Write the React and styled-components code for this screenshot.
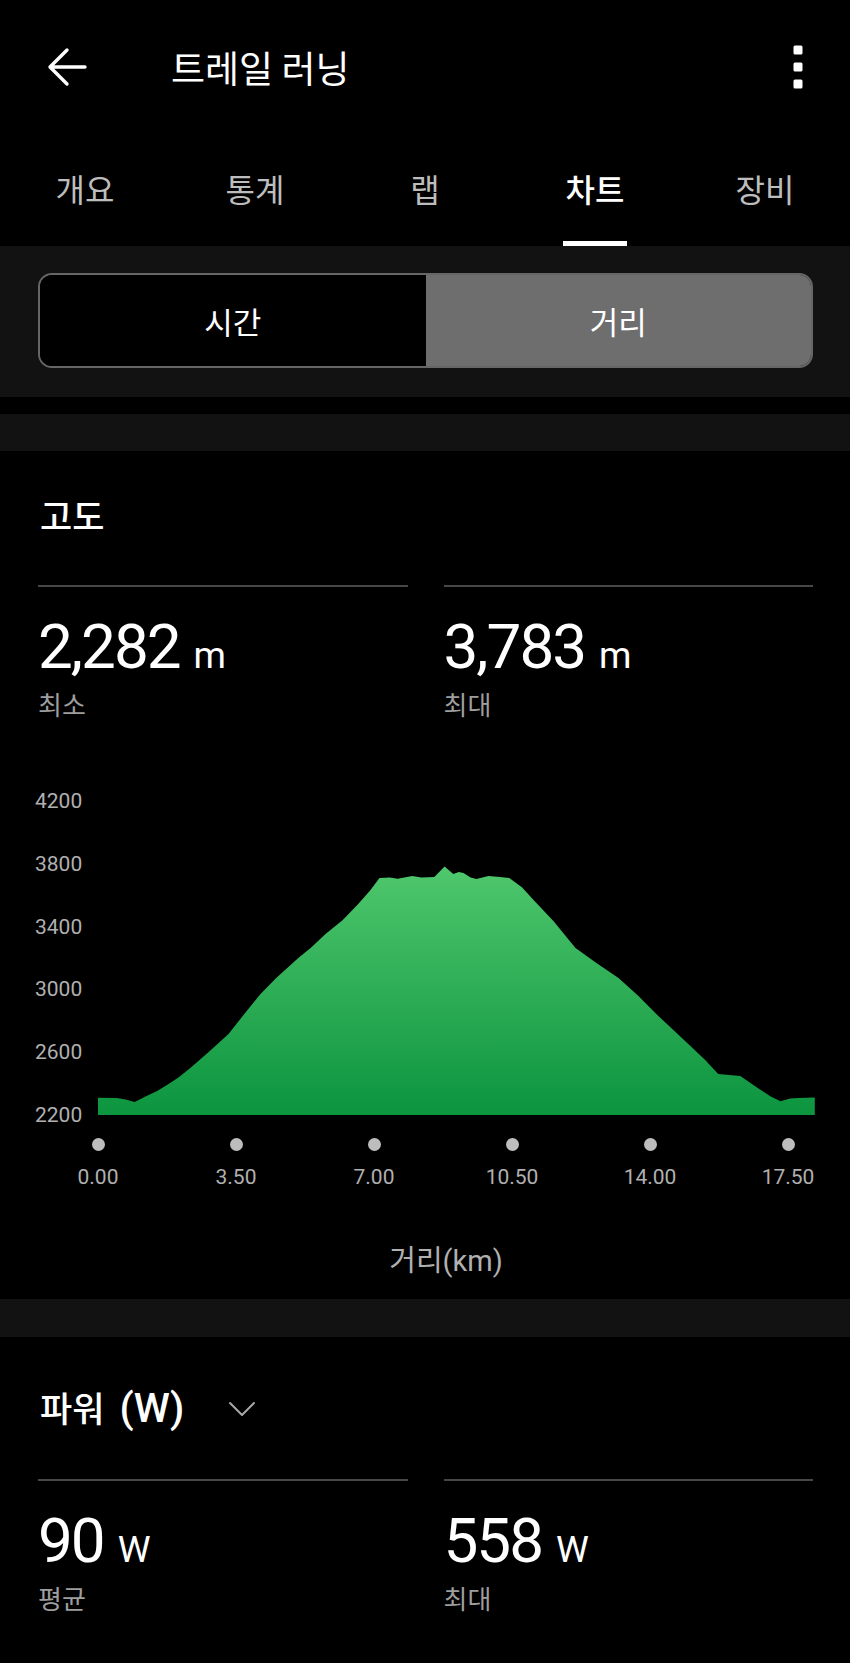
import React from 'react';
import styled, { createGlobalStyle } from 'styled-components';

const GlobalStyle = createGlobalStyle`
  html, body {
    margin: 0;
    padding: 0;
    background: #000;
  }
  body {
    font-family: Roboto, "Noto Sans CJK KR", sans-serif;
    color: #fff;
  }
`;

const Page = styled.div`
  width: 850px;
  min-height: 1663px;
  background: #000;
`;

const TopBar = styled.div`
  display: flex;
  align-items: center;
  height: 134px;
  padding: 0 47px;
`;

const IconButton = styled.div`
  display: flex;
  align-items: center;
  justify-content: center;
  color: #fff;
`;

const Title = styled.h1`
  margin: 0 0 0 84px;
  flex: 1;
  font-family: "Noto Sans CJK KR", sans-serif;
  font-size: 37px;
  font-weight: 400;
  line-height: 44px;
  color: #fff;
`;

const TabBar = styled.div`
  display: grid;
  grid-template-columns: repeat(5, 1fr);
  height: 112px;
`;

const Tab = styled.div`
  display: flex;
  flex-direction: column;
  align-items: center;
  justify-content: flex-end;
`;

const TabLabel = styled.span`
  font-family: "Noto Sans CJK KR", sans-serif;
  font-size: 32px;
  line-height: 40px;
  margin-bottom: 33px;
  font-weight: ${({ active }) => (active ? 500 : 400)};
  color: ${({ active }) => (active ? '#fff' : '#bdbdbd')};
`;

const TabIndicator = styled.div`
  width: 64px;
  height: 5px;
  background: ${({ active }) => (active ? '#fff' : 'transparent')};
`;

const ToggleBand = styled.div`
  background: #121212;
  padding: 27px 37px 29px 38px;
`;

const SegmentControl = styled.div`
  display: grid;
  grid-template-columns: 1fr 1fr;
  height: 95px;
  box-sizing: border-box;
  border: 2px solid #666;
  border-radius: 14px;
  overflow: hidden;
`;

const Segment = styled.div`
  display: flex;
  align-items: center;
  justify-content: center;
  font-family: "Noto Sans CJK KR", sans-serif;
  font-size: 31px;
  font-weight: 400;
  color: #fff;
  background: ${({ active }) => (active ? '#6e6e6e' : '#000')};
`;

const Gap = styled.div`
  height: ${({ h }) => h}px;
  background: ${({ grey }) => (grey ? '#121212' : '#000')};
`;

const Card = styled.section`
  background: #000;
  padding-bottom: ${({ pb }) => pb || 0}px;
`;

const CardHeader = styled.div`
  display: flex;
  align-items: center;
  height: ${({ tall }) => (tall ? 48 : 40)}px;
  margin-top: 48px;
  padding-left: 40px;
  gap: 44px;
`;

const CardTitle = styled.h2`
  margin: 0;
  font-family: Roboto, "Noto Sans CJK KR", sans-serif;
  font-size: 35px;
  font-weight: 500;
  line-height: 40px;
  color: #fff;
`;

const TitleUnit = styled.span`
  margin-left: 5px;
  font-size: 41px;
`;

const StatGrid = styled.div`
  display: grid;
  grid-template-columns: 1fr 1fr;
  column-gap: 36px;
  padding: 0 37px 0 38px;
  margin-top: 46px;
`;

const Stat = styled.div`
  border-top: 2px solid #474747;
  padding-top: 29px;
`;

const StatValue = styled.div`
  display: flex;
  align-items: baseline;
  height: 62px;
  font-family: Roboto, sans-serif;
  font-size: 62px;
  line-height: 62px;
  letter-spacing: -2px;
  color: #fff;
`;

const Unit = styled.span`
  font-size: 37px;
  letter-spacing: 0;
  margin-left: 14px;
`;

const StatLabel = styled.div`
  margin-top: 11px;
  font-family: "Noto Sans CJK KR", sans-serif;
  font-size: 26px;
  line-height: 30px;
  color: #9e9e9e;
`;

const Chart = styled.div`
  margin-top: 72px;
`;

const PlotRow = styled.div`
  display: flex;
  padding-left: 35px;
`;

const YAxis = styled.div`
  display: flex;
  flex-direction: column;
  justify-content: space-between;
  width: 63px;
  height: 334px;
`;

const AxisText = styled.span`
  font-family: Roboto, sans-serif;
  font-size: 21px;
  line-height: 20px;
  color: #b0b0b0;
`;

const Plot = styled.svg`
  display: block;
  margin-top: 10px;
`;

const TickRow = styled.div`
  display: grid;
  grid-template-columns: repeat(6, 138px);
  margin: 13px 0 0 29px;
`;

const Tick = styled.div`
  display: flex;
  flex-direction: column;
  align-items: center;
  gap: 14px;
`;

const TickDot = styled.div`
  width: 13px;
  height: 13px;
  border-radius: 50%;
  background: #bdbdbd;
`;

const TickLabel = styled(AxisText)`
  line-height: 24px;
`;

const AxisTitle = styled.div`
  margin-top: 55px;
  padding-left: 42px;
  text-align: center;
  font-family: Roboto, "Noto Sans CJK KR", sans-serif;
  font-size: 29px;
  line-height: 34px;
  color: #b0b0b0;
`;

const PLOT_W = 717;
const PLOT_H = 314;
const KM_PX = 39.43;
const Y_MIN = 2200;
const Y_MAX = 4200;

// distance (km), elevation (m)
const profile = [
  [0, 2310], [0.48, 2308], [0.7, 2298], [0.93, 2282], [1.23, 2321], [1.5, 2352],
  [1.79, 2397], [2.05, 2440], [2.34, 2499], [2.8, 2600], [3.31, 2716], [3.7, 2840],
  [4.12, 2971], [4.52, 3073], [5.08, 3200], [5.4, 3265], [5.77, 3353], [6.2, 3440],
  [6.6, 3544], [6.9, 3630], [7.14, 3710], [7.4, 3712], [7.6, 3705], [7.97, 3722],
  [8.2, 3712], [8.53, 3715], [8.79, 3783], [9.01, 3735], [9.15, 3748], [9.27, 3741],
  [9.45, 3712], [9.6, 3703], [9.9, 3722], [10.2, 3716], [10.43, 3710], [10.75, 3650],
  [11.07, 3563], [11.55, 3436], [12.11, 3264], [12.64, 3168], [13.2, 3073], [13.7, 2960],
  [14.16, 2843], [14.97, 2652], [15.4, 2550], [15.73, 2461], [16.29, 2448], [16.77, 2366],
  [17.05, 2320], [17.31, 2288], [17.55, 2305], [17.74, 2308], [18.18, 2312],
];

const yTicks = [4200, 3800, 3400, 3000, 2600, 2200];
const xTicks = ['0.00', '3.50', '7.00', '10.50', '14.00', '17.50'];

const toX = (km) => km * KM_PX;
const toY = (m) => PLOT_H - ((m - Y_MIN) / (Y_MAX - Y_MIN)) * PLOT_H;

const areaPath = () => {
  const line = profile.map(([km, m], i) => `${i ? 'L' : 'M'}${toX(km).toFixed(1)} ${toY(m).toFixed(1)}`).join(' ');
  const last = profile[profile.length - 1];
  return `${line} L${toX(last[0]).toFixed(1)} ${PLOT_H} L0 ${PLOT_H} Z`;
};

const BackArrow = () => (
  <svg width="40" height="40" viewBox="0 0 40 40" fill="none" stroke="#fff" strokeWidth="3.4" strokeLinecap="round" strokeLinejoin="round">
    <path d="M3 20 H38 M3 20 L20 3 M3 20 L20 37" />
  </svg>
);

const Kebab = () => (
  <svg width="10" height="44" viewBox="0 0 10 44" fill="#fff">
    <rect x="0.5" y="0.5" width="9" height="9" rx="1.5" />
    <rect x="0.5" y="17.5" width="9" height="9" rx="1.5" />
    <rect x="0.5" y="34.5" width="9" height="9" rx="1.5" />
  </svg>
);

const Chevron = () => (
  <svg width="28" height="16" viewBox="0 0 28 16" fill="none" stroke="#a8a8a8" strokeWidth="2" strokeLinecap="round" strokeLinejoin="round">
    <path d="M2 2 L14 14 L26 2" />
  </svg>
);

const tabs = ['개요', '통계', '랩', '차트', '장비'];

const StatBlock = ({ value, unit, label }) => (
  <Stat>
    <StatValue>
      {value}
      <Unit>{unit}</Unit>
    </StatValue>
    <StatLabel>{label}</StatLabel>
  </Stat>
);

const ElevationChart = () => (
  <Chart>
    <PlotRow>
      <YAxis>
        {yTicks.map((t) => (
          <AxisText key={t}>{t}</AxisText>
        ))}
      </YAxis>
      <Plot width={PLOT_W} height={PLOT_H} viewBox={`0 0 ${PLOT_W} ${PLOT_H}`}>
        <defs>
          <linearGradient id="elevFill" x1="0" y1="0" x2="0" y2="1">
            <stop offset="0" stopColor="#4fc76d" />
            <stop offset="1" stopColor="#0c943f" />
          </linearGradient>
        </defs>
        <path d={areaPath()} fill="url(#elevFill)" />
      </Plot>
    </PlotRow>
    <TickRow>
      {xTicks.map((t) => (
        <Tick key={t}>
          <TickDot />
          <TickLabel>{t}</TickLabel>
        </Tick>
      ))}
    </TickRow>
    <AxisTitle>거리(km)</AxisTitle>
  </Chart>
);

export default function App() {
  return (
    <Page>
      <GlobalStyle />
      <TopBar>
        <IconButton>
          <BackArrow />
        </IconButton>
        <Title>트레일 러닝</Title>
        <IconButton>
          <Kebab />
        </IconButton>
      </TopBar>
      <TabBar>
        {tabs.map((t) => (
          <Tab key={t}>
            <TabLabel active={t === '차트'}>{t}</TabLabel>
            <TabIndicator active={t === '차트'} />
          </Tab>
        ))}
      </TabBar>
      <ToggleBand>
        <SegmentControl>
          <Segment>시간</Segment>
          <Segment active>거리</Segment>
        </SegmentControl>
      </ToggleBand>
      <Gap h={17} />
      <Gap h={37} grey />
      <Card pb={21}>
        <CardHeader>
          <CardTitle>고도</CardTitle>
        </CardHeader>
        <StatGrid>
          <StatBlock value="2,282" unit="m" label="최소" />
          <StatBlock value="3,783" unit="m" label="최대" />
        </StatGrid>
        <ElevationChart />
      </Card>
      <Gap h={38} grey />
      <Card pb={40}>
        <CardHeader tall>
          <CardTitle>
            파워<TitleUnit> (W)</TitleUnit>
          </CardTitle>
          <Chevron />
        </CardHeader>
        <StatGrid>
          <StatBlock value="90" unit="W" label="평균" />
          <StatBlock value="558" unit="W" label="최대" />
        </StatGrid>
      </Card>
    </Page>
  );
}
